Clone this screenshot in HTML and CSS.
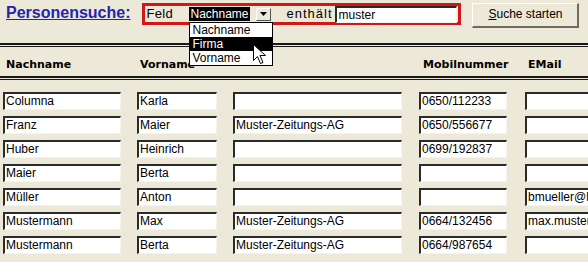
FILE: index.html
```html
<!DOCTYPE html>
<html>
<head>
<meta charset="utf-8">
<link rel="stylesheet" href="styles.css">
</head>
<body>
<div class="topbar">
  <a class="title" href="#">Personensuche:</a>
  <div class="searchbox">
    <span class="lbl feld">Feld</span>
    <div class="combo">
      <span class="combo-val">Nachname</span>
      <span class="combo-btn"><svg width="7" height="4" viewBox="0 0 7 4"><path d="M0 0h7L3.5 4z" fill="#000"/></svg></span>
      <ul class="droplist">
        <li>Nachname</li>
        <li class="sel">Firma</li>
        <li>Vorname</li>
      </ul>
      <svg class="cursor" width="13" height="21" viewBox="0 0 13 21"><path d="M0.5 0.5v16l4-4 3 7 2.5-1-3-7h5.5z" fill="#fff" stroke="#000" stroke-width="1"/></svg>
    </div>
    <span class="lbl enth">enthält</span>
    <div class="field search">muster</div>
  </div>
  <div class="btn"><u>S</u>uche starten</div>
</div>
<div class="rule"></div>
<div class="grid head">
  <span>Nachname</span><span>Vorname</span><span></span><span class="mob">Mobilnummer</span><span>EMail</span>
</div>
<div class="rule"></div>
<div class="grid rows">
  <div class="field w1">Columna</div><div class="field w2">Karla</div><div class="field w3"></div><div class="field w4">0650/112233</div><div class="field w5"></div>
  <div class="field w1">Franz</div><div class="field w2">Maier</div><div class="field w3">Muster-Zeitungs-AG</div><div class="field w4">0650/556677</div><div class="field w5"></div>
  <div class="field w1">Huber</div><div class="field w2">Heinrich</div><div class="field w3"></div><div class="field w4">0699/192837</div><div class="field w5"></div>
  <div class="field w1">Maier</div><div class="field w2">Berta</div><div class="field w3"></div><div class="field w4"></div><div class="field w5"></div>
  <div class="field w1">Müller</div><div class="field w2">Anton</div><div class="field w3"></div><div class="field w4"></div><div class="field w5">bmueller@hotmail.com</div>
  <div class="field w1">Mustermann</div><div class="field w2">Max</div><div class="field w3">Muster-Zeitungs-AG</div><div class="field w4">0664/132456</div><div class="field w5">max.mustermann@muster.at</div>
  <div class="field w1">Mustermann</div><div class="field w2">Berta</div><div class="field w3">Muster-Zeitungs-AG</div><div class="field w4">0664/987654</div><div class="field w5"></div>
</div>
</body>
</html>
```
FILE: styles.css
```css
html, body {
  margin: 0;
  padding: 0;
  background: #ece9d8;
  font-family: "Liberation Sans", Arial, sans-serif;
  font-size: 12px;
  color: #000;
  overflow: hidden;
  width: 588px;
  height: 262px;
}
.topbar {
  display: flex;
  align-items: flex-start;
  height: 43px;
  padding-left: 6px;
}
.title {
  margin-top: 4px;
  font-size: 16px;
  font-weight: bold;
  color: #2424b2;
  text-decoration: underline;
  line-height: 18px;
}
.searchbox {
  margin-top: 3px;
  margin-left: 12px;
  width: 313px;
  height: 16px;
  border: 3px solid #d01818;
  display: flex;
  align-items: center;
  position: relative;
}
.lbl {
  font-size: 13px;
  line-height: 16px;
}
.feld {
  margin-left: 1px;
  width: 43px;
  letter-spacing: 0.3px;
}
.combo {
  position: relative;
  width: 82px;
  height: 14px;
  border-left: 1px solid #000;
  display: flex;
  align-items: center;
}
.combo-val {
  background: #000;
  color: #fff;
  font-size: 12px;
  line-height: 14px;
  padding: 0 1px 0 0;
  white-space: nowrap;
}
.combo-btn {
  margin-left: auto;
  margin-right: 1px;
  width: 15px;
  height: 13px;
  background: #ece9d8;
  border-top: 1px solid #fff;
  border-left: 1px solid #fff;
  border-right: 1px solid #555;
  border-bottom: 1px solid #555;
  box-sizing: border-box;
  display: flex;
  align-items: center;
  justify-content: center;
}
.droplist {
  position: absolute;
  left: -1px;
  top: 15px;
  width: 82px;
  margin: 0;
  padding: 0;
  list-style: none;
  background: #fff;
  border: 1px solid #000;
  z-index: 2;
}
.droplist li {
  font-size: 12px;
  line-height: 14px;
  padding-left: 2px;
}
.droplist li.sel {
  background: #000;
  color: #fff;
}
.cursor {
  position: absolute;
  left: 63px;
  top: 37px;
  z-index: 3;
}
.enth {
  margin-left: 14px;
  width: 49px;
  letter-spacing: 1px;
}
.field {
  box-sizing: border-box;
  height: 18px;
  background: #fff;
  border-top: 2px solid #2a2a2a;
  border-left: 2px solid #2a2a2a;
  border-right: 1px solid #f4f3ee;
  border-bottom: 1px solid #f4f3ee;
  font-size: 12px;
  line-height: 15px;
  padding-left: 1px;
  white-space: nowrap;
  overflow: hidden;
}
.search {
  width: 122px;
  height: 17px;
}
.btn {
  margin-left: 11px;
  margin-top: 3px;
  box-sizing: border-box;
  width: 107px;
  height: 25px;
  border-top: 1px solid #fff;
  border-left: 1px solid #fff;
  border-right: 2px solid #6d6b60;
  border-bottom: 2px solid #6d6b60;
  text-align: center;
  line-height: 21px;
  font-size: 12px;
}
.rule {
  height: 1px;
  border-top: 2px solid #1a1a1a;
  border-bottom: 1px solid #1a1a1a;
}
.grid {
  display: grid;
  grid-template-columns: 134px 96px 186px 106px 1fr;
  padding-left: 3px;
}
.head {
  box-sizing: border-box;
  height: 29px;
  padding-top: 5px;
  align-items: center;
  font-family: "DejaVu Sans", Verdana, sans-serif;
  font-size: 11px;
  font-weight: bold;
}
.head span {
  padding-left: 3px;
}
.head .mob {
  padding-left: 4px;
}
.rows {
  margin-top: 12px;
  row-gap: 6px;
}
.w1 { width: 118px; }
.w2 { width: 80px; }
.w3 { width: 169px; }
.w4 { width: 88px; }
.w5 { width: 80px; }
```
